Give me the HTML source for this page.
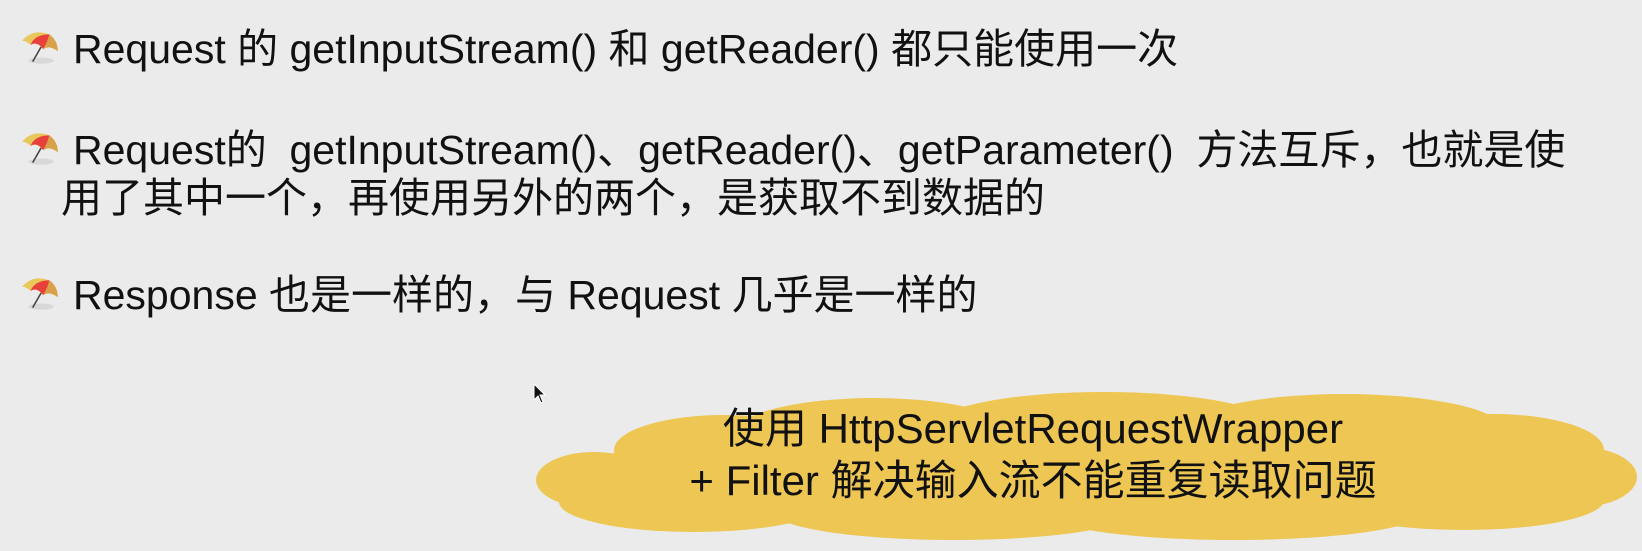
<!DOCTYPE html>
<html><head><meta charset="utf-8"><style>
html,body{margin:0;padding:0}
body{width:1642px;height:551px;background:#ebebeb;position:relative;overflow:hidden;font-family:"Liberation Sans","Noto Sans CJK SC",sans-serif;color:#111}
.t{position:absolute;left:73px;font-size:41px;line-height:50px;white-space:nowrap}
.u{position:absolute;left:18px;width:44px;height:42px}
.c{position:absolute;left:683px;width:700px;text-align:center;font-size:42px;line-height:52px;top:403px;color:#111;white-space:nowrap}
</style></head><body>
<svg width="0" height="0" style="position:absolute"><defs>
<g id="um">
<ellipse cx="22" cy="33" rx="12" ry="3" fill="#ccc" opacity=".6"/>
<path d="M4 14 Q14 2 30 8 Q38 14 38 24 Q30 18 24 22 Q18 14 12 18 Q8 14 4 14Z" fill="#e8c85a"/>
<path d="M12 18 Q16 8 30 8 Q28 16 24 22 Q18 14 12 18Z" fill="#e8403a"/>
<path d="M30 8 Q38 14 38 24 Q30 18 24 22 Q28 16 30 8Z" fill="#d9a24a"/>
<line x1="22" y1="20" x2="14" y2="34" stroke="#444" stroke-width="1.5"/>
</g></defs></svg>
<svg class="u" style="top:26px" viewBox="0 0 42 40"><use href="#um"/></svg>
<div class="t" style="top:24px">Request 的 getInputStream() 和 getReader() 都只能使用一次</div>
<svg class="u" style="top:127px" viewBox="0 0 42 40"><use href="#um"/></svg>
<div class="t" style="top:125px">Request的&nbsp; getInputStream()、getReader()、getParameter()&nbsp; 方法互斥，也就是使</div>
<div class="t" style="top:173px;left:61px">用了其中一个，再使用另外的两个，是获取不到数据的</div>
<svg class="u" style="top:272px" viewBox="0 0 42 40"><use href="#um"/></svg>
<div class="t" style="top:270px">Response 也是一样的，与 Request 几乎是一样的</div>
<svg style="position:absolute;left:534px;top:392px" width="1105" height="150" viewBox="0 0 1105 150">
<g fill="#eec653">
<ellipse cx="552" cy="80" rx="520" ry="45"/>
<ellipse cx="190" cy="58" rx="110" ry="35"/>
<ellipse cx="340" cy="42" rx="140" ry="36"/>
<ellipse cx="570" cy="34" rx="170" ry="34"/>
<ellipse cx="810" cy="38" rx="160" ry="36"/>
<ellipse cx="960" cy="58" rx="110" ry="36"/>
<ellipse cx="60" cy="88" rx="58" ry="28"/>
<ellipse cx="1045" cy="85" rx="58" ry="30"/>
<ellipse cx="160" cy="110" rx="135" ry="30"/>
<ellipse cx="420" cy="120" rx="180" ry="28"/>
<ellipse cx="700" cy="120" rx="190" ry="28"/>
<ellipse cx="930" cy="108" rx="140" ry="30"/>
</g></svg>
<div class="c">使用 HttpServletRequestWrapper<br>+ Filter 解决输入流不能重复读取问题</div>
<svg style="position:absolute;left:533px;top:383px" width="14" height="22" viewBox="0 0 14 22"><path d="M1 1 L1 17 L5 13 L8 20 L10 19 L7 12 L12 12Z" fill="#111" stroke="#fff" stroke-width="1"/></svg>
</body></html>
